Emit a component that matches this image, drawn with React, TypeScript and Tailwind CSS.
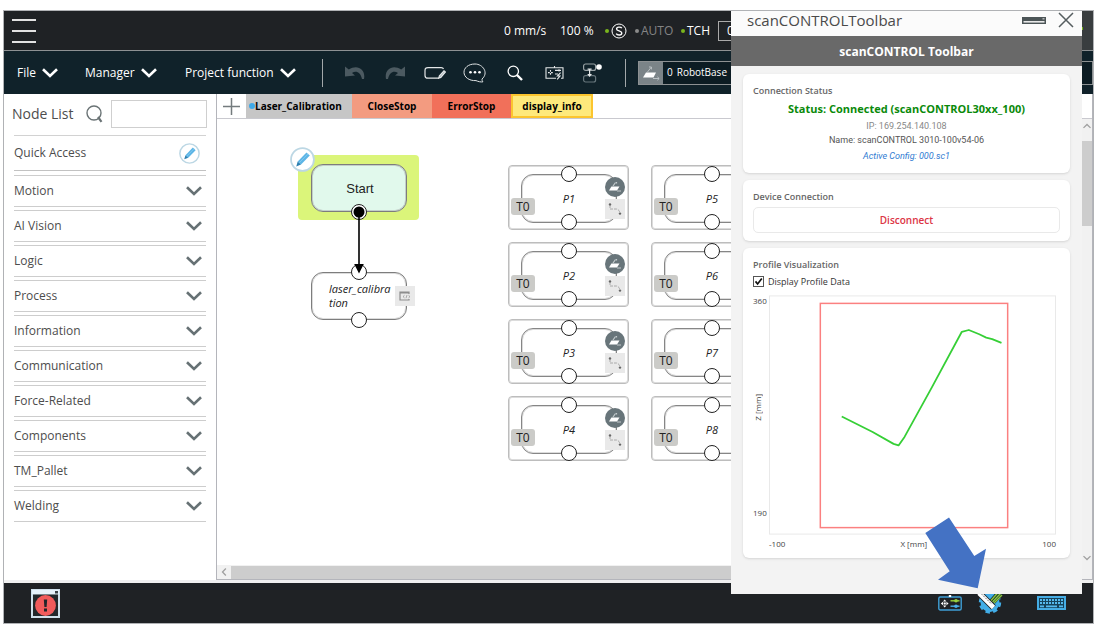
import React from "react";

const categories = [
  "Motion",
  "AI Vision",
  "Logic",
  "Process",
  "Information",
  "Communication",
  "Force-Related",
  "Components",
  "TM_Pallet",
  "Welding",
];

const points = ["P1", "P5", "P2", "P6", "P3", "P7", "P4", "P8"];

function Chevron({ className }: { className: string }) {
  return (
    <svg viewBox="0 0 16 10" className={className} fill="none" stroke="currentColor" strokeWidth="2.6">
      <path d="M1 1.3 L8 8 L15 1.3" />
    </svg>
  );
}

function PencilBadge({ className }: { className: string }) {
  return (
    <svg viewBox="0 0 24 24" className={className}>
      <circle cx="12" cy="12" r="11" fill="#fff" stroke="#bcd7e4" strokeWidth="1.7" />
      <path d="M7.4 14 L15.8 5.2 L19 8.2 L10.6 16.8 Z" fill="#5cb5e6" />
      <path d="M7.4 14 L10.6 16.8 L6 18.6 Z" fill="#2b7fb0" />
      <path d="M9 15 L17.2 6.6" stroke="#8fd0f2" strokeWidth="0.7" />
    </svg>
  );
}

function Port({ className }: { className: string }) {
  return <span className={`absolute size-4 rounded-full border border-[#222] bg-white ${className}`} />;
}

function TopBar() {
  return (
    <header className="flex h-[39px] items-center justify-between bg-[#1f2225] text-[12px] text-white">
      <button aria-label="Menu" className="ml-2 flex h-6 w-6 flex-col justify-between">
        <span className="h-0.5 w-full bg-[#e2e2e2]" />
        <span className="h-0.5 w-full bg-[#e2e2e2]" />
        <span className="h-0.5 w-full bg-[#e2e2e2]" />
      </button>
      <div className="flex h-full items-center">
        <span className="w-14">0 mm/s</span>
        <span className="w-[45px]">100 %</span>
        <span className="size-1 rounded-full bg-[#7ab51d]" />
        <svg viewBox="0 0 16 16" className="mr-2 ml-0.5 size-4" fill="none" stroke="#fff">
          <circle cx="8" cy="8" r="7" strokeWidth="1" />
          <path d="M10.8 5.2 C9.8 3.6 5.6 3.6 5.6 6 C5.6 8.4 10.8 7.4 10.8 10 C10.8 12.6 6.2 12.4 5.2 10.6" strokeWidth="1.4" />
        </svg>
        <span className="size-1 rounded-full bg-[#8b8b8b]" />
        <span className="mr-1.5 ml-0.5 w-[34px] text-[#858585]">AUTO</span>
        <span className="size-1 rounded-full bg-[#7ab51d]" />
        <span className="ml-0.5 w-[31px]">TCH</span>
        <span className="h-5 w-[352px] border border-[#aaa] pl-2 leading-[17px]">0</span>
        <span className="ml-2 flex h-full w-[15px] items-center bg-[#393d3f] pb-1">
          <span className="ml-0.5 size-[3px] bg-[#7ab51d]" />
        </span>
      </div>
    </header>
  );
}

function ToolBar() {
  return (
    <nav className="flex h-11 items-center border-t border-[#8d9193] bg-[#10222a] pl-[13px] text-[12px] text-white">
      <button className="flex w-[68px] items-center gap-1.5">
        File <Chevron className="h-2.5 w-4" />
      </button>
      <button className="flex w-[100px] items-center gap-1.5">
        Manager <Chevron className="h-2.5 w-4" />
      </button>
      <button className="flex w-[137px] items-center gap-1.5 whitespace-nowrap">
        Project function <Chevron className="h-2.5 w-4" />
      </button>
      <span className="mr-[22px] h-7 w-px bg-[#a3a8aa]" />
      <div className="flex w-[282px] items-center">
        <button aria-label="Undo" className="w-10">
          <svg viewBox="0 0 20 14" className="h-3.5 w-5" fill="#4c5a61">
            <path d="M0 0.5 V10.5 L10 9.6 L7 7 C11 4.5 15.5 6 17 13 H19 C21 3 12 -2 3.8 3.6 Z" />
          </svg>
        </button>
        <button aria-label="Redo" className="w-[39px]">
          <svg viewBox="0 0 20 14" className="h-3.5 w-5" fill="#4c5a61">
            <path d="M20 0.5 V10.5 L10 9.6 L13 7 C9 4.5 4.5 6 3 13 H1 C-1 3 8 -2 16.2 3.6 Z" />
          </svg>
        </button>
        <button aria-label="Rename" className="w-[39px]">
          <svg viewBox="0 0 22 14" className="h-3.5 w-[22px]" fill="none" stroke="#e4e7e8" strokeWidth="1.2">
            <path d="M19.5 3 C19 1.5 18 1.6 17 1.6 H4 Q1 1.6 1 4.4 V9.4 Q1 12.2 4 12.2 H15" />
            <path d="M15.4 9.8 L20 4.8 L21.4 6 L16.8 11.4 L14.8 12 Z" fill="#a8b2b6" />
          </svg>
        </button>
        <button aria-label="Comment" className="w-11">
          <svg viewBox="0 0 24 20" className="h-5 w-6" fill="none" stroke="#dfe3e4" strokeWidth="1">
            <path d="M19 16 C26 10 20 1 12 1 C5 1 1 5 1 9.3 C1 14 6 18 13 17.6 C15 18.5 18 19.3 20 18.8 C19 18 19 17 19 16 Z" />
            <g fill="#fff" stroke="none">
              <circle cx="7.5" cy="9.3" r="1.3" />
              <circle cx="12" cy="9.3" r="1.3" />
              <circle cx="16.5" cy="9.3" r="1.3" />
            </g>
          </svg>
        </button>
        <button aria-label="Search" className="w-[38px]">
          <svg viewBox="0 0 16 16" className="size-4" fill="none" stroke="#fff">
            <circle cx="6.3" cy="6.3" r="5.2" strokeWidth="1.3" />
            <path d="M10 10 L15 15" strokeWidth="2.4" />
          </svg>
        </button>
        <button aria-label="Controller" className="w-[38px]">
          <svg viewBox="0 0 19 14" className="h-3.5 w-[19px]" fill="none" stroke="#e4e7e8" strokeWidth="1.1">
            <path d="M11 12.2 H1 V1.8 H18 V12.2 H16 M9.5 0 V1.8" />
            <path d="M3 6.6 H8 M5.5 4 V9.2" strokeDasharray="1.8 1.2" />
            <path d="M10 4.4 H16 M10 8 H13 M14 3.2 V5.6" />
            <path d="M15.6 6.6 L12.4 10 H15 L12.2 13.4" />
          </svg>
        </button>
        <button aria-label="Flow">
          <svg viewBox="0 0 20 20" className="size-5" fill="none" strokeWidth="1.2">
            <rect x="0.6" y="1" width="12" height="6.4" rx="2" stroke="#9aa3a6" />
            <rect x="0.6" y="12.6" width="12" height="6.4" rx="2" stroke="#66757b" />
            <path d="M6.6 6 V12 M4.6 6.2 H8.6" stroke="#e4e7e8" />
            <path d="M4.2 11 H9 L6.6 14 Z" fill="#e4e7e8" />
            <circle cx="16" cy="4" r="2.8" fill="#fff" />
          </svg>
        </button>
      </div>
      <span className="mr-3 -ml-0.5 h-7 w-px bg-[#a3a8aa]" />
      <div className="flex h-6 flex-1 items-center border border-[#8d9193] bg-[#0c1c23] text-[10px]">
        <span className="flex h-full w-6 items-center justify-center bg-[#7b8488]">
          <FrameIcon />
        </span>
        <span className="ml-1">0</span>
        <span className="ml-1">RobotBase</span>
      </div>
    </nav>
  );
}

function FrameIcon() {
  return (
    <svg viewBox="0 0 18 16" className="h-4 w-[18px]" fill="none">
      <path d="M4 7.5 H14 L11.5 12.5 H1 Z" fill="#fff" />
      <path d="M5.5 7 L9 2.5 M7 2 H9.4 V4.4 M11 13.5 H17 M15.4 11.8 L17.2 13.5 L15.4 15.2" stroke="#c3cacc" strokeWidth="0.9" />
    </svg>
  );
}

function Sidebar() {
  return (
    <aside className="flex w-[213px] shrink-0 flex-col border-r border-[#b4b5bb] bg-white text-[12px] text-[#4d4d4d]">
      <div className="mr-2 flex h-[41px] items-center pb-0.5 pl-2">
        <label htmlFor="node-search" className="w-[74px] text-[14px]">
          Node List
        </label>
        <svg viewBox="0 0 17 18" className="h-[18px] w-[17px]" fill="none" stroke="#6a7375">
          <circle cx="8" cy="8" r="7" strokeWidth="1.4" />
          <path d="M12 12 L15.5 16.8" strokeWidth="2.2" />
        </svg>
        <input id="node-search" className="ml-2 h-7 w-24 border border-[#cfcfcf] bg-white px-1 outline-none" />
      </div>
      <div className="mr-2.5 ml-2.5 flex h-9 items-center justify-between border-t border-b border-t-[#d2d2d2] border-b-[#c2c2c2]">
        <span>Quick Access</span>
        <button aria-label="Edit quick access" className="mr-1.5">
          <PencilBadge className="size-[21px]" />
        </button>
      </div>
      <ul className="mt-1 mr-2.5 ml-2.5 flex flex-col gap-[3px]">
        {categories.map((name) => (
          <li key={name}>
            <button className="flex h-8 w-full items-center justify-between border-y border-[#cdcdcd] pr-1">
              {name}
              <Chevron className="h-2.5 w-4 text-[#667174]" />
            </button>
          </li>
        ))}
      </ul>
    </aside>
  );
}

function PointNode({ name }: { name: string }) {
  return (
    <div className="relative h-[65px] w-[121px] rounded-sm border border-[#bdbdbd] shadow-[inset_0_0_0_1px_#dcdcdc]">
      <div className="absolute top-2 left-3 flex h-[49px] w-24 items-center justify-center rounded-[12px] border border-[#868686] pt-px text-[11px] text-[#222] italic shadow-[inset_0_0_0_1px_#dcdcdc]">
        {name}
      </div>
      <Port className="top-0 left-[52px]" />
      <Port className="top-12 left-[52px]" />
      <span className="absolute top-8 left-0.5 h-[17px] w-6 rounded-[3px] bg-[#cbcbc8] text-center text-[12px] leading-[18px] text-[#222]">
        T0
      </span>
      <span className="absolute top-[33px] right-[3px] flex size-5 items-center justify-center bg-[#e9e9e9]">
        <svg viewBox="0 0 14 14" className="size-3.5" fill="none">
          <path d="M2 3 V7 H8 Q11 7 12 11" stroke="#aaa" strokeDasharray="3 1" />
          <circle cx="2" cy="2.4" r="1.2" fill="#666" />
          <circle cx="12" cy="11.6" r="1.2" fill="#666" />
        </svg>
      </span>
      <span className="absolute top-[11px] right-[3px] flex size-5 items-center justify-center rounded-full bg-[#68757a]">
        <svg viewBox="0 0 14 12" className="h-3 w-3.5" fill="none">
          <path d="M3.4 5.6 H11.5 L9 9.4 H1 Z" fill="#fff" />
          <path d="M5 5 L7.5 1.5 M8.5 1 V2.5 M9 10 H13" stroke="#c3cacc" strokeWidth="1.2" />
        </svg>
      </span>
    </div>
  );
}

function FlowCanvas() {
  return (
    <div className="relative min-h-[446px] flex-1 overflow-hidden bg-white">
      <div className="absolute top-[36px] left-[81px] h-[65px] w-[121px] rounded-sm bg-[#dbf57a]" />
      <div className="absolute top-[45px] left-[94px] flex h-12 w-24 items-center justify-center rounded-[12px] border border-[#7d7d7d] bg-[#e1f9ec] pt-0.5 pl-0.5 font-['Liberation_Sans',sans-serif] text-[13px] text-[#222] shadow-[inset_0_0_0_1px_#c3d0c9]">
        Start
      </div>
      <PencilBadge className="absolute top-[28px] left-[73px] size-[25px]" />
      <div className="absolute top-[153px] left-[94px] h-12 w-24 rounded-[12px] border border-[#7d7d7d] bg-white pt-[9px] pl-[17px] text-[11px] leading-[14px] text-[#222] italic shadow-[inset_0_0_0_1px_#dcdcdc]">
        laser_calibra
        <br />
        tion
      </div>
      <Port className="top-[85px] left-[134px]" />
      <Port className="top-[145px] left-[134px]" />
      <Port className="top-[193px] left-[134px]" />
      <svg viewBox="0 0 16 70" className="absolute top-[85px] left-[134px] h-[70px] w-4">
        <circle cx="8" cy="8" r="5.5" />
        <path d="M7.2 8 H8.8 V60 H12.8 L8 69.5 L3.2 60 H7.2 Z" />
      </svg>
      <span className="absolute top-[167px] left-[178px] flex size-5 items-center justify-center bg-[#e9e9e9]">
        <svg viewBox="0 0 12 10" className="h-2.5 w-3" fill="none" stroke="#8d8d8d">
          <path d="M10 3 V1 H1 V9 H10 V8 M1 2 H10" strokeWidth="1.2" />
          <path d="M5.5 4.3 L4 5.6 L5.5 6.9 M9.5 4.3 L11 5.6 L9.5 6.9 M8 4 L7 7.2" strokeWidth="0.7" />
        </svg>
      </span>
      <div className="absolute top-[46px] left-[291px] grid grid-cols-[121px_121px] gap-x-[22px] gap-y-3">
        {points.map((name) => (
          <PointNode key={name} name={name} />
        ))}
      </div>
    </div>
  );
}

function Workspace() {
  return (
    <main className="flex min-w-0 flex-1 flex-col border-r border-b border-[#b4b5bb]">
      <div className="flex h-[25px] shrink-0 border-b border-[#c9c9cf] text-[10px] font-bold text-black">
        <button aria-label="Add tab" className="flex w-[29px] items-center justify-center">
          <svg viewBox="0 0 17 17" className="size-[17px]" stroke="#747b7e" strokeWidth="1.5">
            <path d="M8.5 0 V17 M0 8.5 H17" />
          </svg>
        </button>
        <button className="flex w-[106px] items-center bg-[#c6c6c6] pl-[3px]">
          <span className="size-1.5 shrink-0 rounded-full bg-[#3fa9e8]" />
          Laser_Calibration
        </button>
        <button className="w-20 bg-[#f39b80]">CloseStop</button>
        <button className="w-[79px] bg-[#f1705a]">ErrorStop</button>
        <button className="w-[82px] border-2 border-[#fcc52e] bg-[#fee97c]">display_info</button>
      </div>
      <div className="flex flex-1">
        <FlowCanvas />
        <div className="flex w-[11px] flex-col items-center justify-between bg-[#f1f1f1] py-1">
          <Chevron className="h-1.5 w-2 rotate-180 text-[#a0a0a0]" />
          <span className="mt-3 h-[85px] w-full bg-[#cdcdcd]" />
          <span className="flex-1" />
          <Chevron className="h-1.5 w-2 text-[#a0a0a0]" />
        </div>
      </div>
      <div className="flex h-[14px] shrink-0 items-center bg-[#f1f1f1] pl-[3px]">
        <Chevron className="h-1.5 w-2 rotate-90 text-[#a0a0a0]" />
        <span className="ml-[3px] h-[13px] w-[620px] bg-[#cdcdcd]" />
      </div>
    </main>
  );
}

function StatusBar() {
  return (
    <footer className="flex h-10 shrink-0 items-center bg-[#1f2225] pr-[27px] pl-[27px]">
      <button aria-label="Errors">
        <svg viewBox="0 0 29 29" className="size-[29px]">
          <path d="M0 0 H29 V29 H0 Z" fill="#cfe0ea" />
          <path d="M2 5.5 H27 V27 H2 Z" fill="#23282b" />
          <path d="M1 1 H28 V5 H1 Z" fill="#e6f2fa" />
          <path d="M24 2 H27 V4.5 H24 Z" fill="#394045" />
          <circle cx="14.5" cy="16.5" r="10.4" fill="#f15b5b" />
          <path d="M12.8 10.5 H16.2 L15.6 18 H13.4 Z M13 19.5 H16 V22.4 H13 Z" fill="#22262a" />
        </svg>
      </button>
      <div className="ml-auto flex items-center">
        <button aria-label="Controller">
          <svg viewBox="0 0 24 16" className="h-4 w-6" fill="none">
            <rect x="0.8" y="2" width="22.4" height="13" rx="1.5" stroke="#3f9fd6" strokeWidth="1.4" />
            <path d="M10.8 1 H13.2" stroke="#fff" strokeWidth="2" />
            <path d="M2.8 8.5 L5 6.8 V10.2 Z M10.6 8.5 L8.4 6.8 V10.2 Z M6.7 4.6 L5 6.6 H8.4 Z M6.7 12.4 L5 10.4 H8.4 Z M5.6 7.6 H7.8 V9.4 H5.6 Z" fill="#fff" />
            <path d="M12.5 5.8 H21.5" stroke="#9bd33c" strokeWidth="1.4" />
            <circle cx="18" cy="5.8" r="1.8" fill="#9bd33c" />
            <path d="M12.5 11.2 H21.5" stroke="#4ab0ea" strokeWidth="1.4" />
            <circle cx="18" cy="11.2" r="1.8" fill="#4ab0ea" />
          </svg>
        </button>
        <button aria-label="Toolbar settings" className="ml-3.5">
          <svg viewBox="0 0 28 28" className="size-7">
            <circle cx="14" cy="13.5" r="6.5" fill="none" stroke="#42aee8" strokeWidth="6" />
            <circle cx="14" cy="13.5" r="9.8" fill="none" stroke="#42aee8" strokeWidth="2.8" strokeDasharray="4.4 3.3" />
            <path d="M25 3 L16.5 12.5" stroke="#10222a" strokeWidth="6.5" />
            <path d="M22.5 3 L14.5 12 M24.5 4.5 L16.5 13 M26 6 L18 14" stroke="#8bc53f" strokeWidth="1.5" />
            <path d="M3 4 L17.5 18.5" stroke="#1f2225" strokeWidth="6.5" />
            <path d="M3 4 L17.5 18.5" stroke="#fff" strokeWidth="4.6" />
            <path d="M5 4.5 L15 14.5" stroke="#555" strokeWidth="0.8" strokeDasharray="2 1" />
          </svg>
        </button>
        <button aria-label="Keyboard" className="ml-[33px]">
          <svg viewBox="0 0 29 14" className="h-3.5 w-[29px]">
            <rect width="29" height="14" fill="#45ade5" />
            <path d="M2 2 H27 V12 H2 Z" fill="#16435b" />
            <path d="M3 4 H26 M3 7 H26" stroke="#55b9ee" strokeWidth="2" strokeDasharray="2 1" />
            <path d="M3 10.3 H7 M9 10.3 H20 M22 10.3 H26" stroke="#55b9ee" strokeWidth="1.8" />
          </svg>
        </button>
      </div>
    </footer>
  );
}

function ProfileChart() {
  return (
    <div className="grid grid-cols-[16px_1fr] text-[8px] leading-[10px] text-[#444]">
      <div className="flex flex-col items-start justify-between pt-px pb-[17px]">
        <span>360</span>
        <span className="rotate-180 whitespace-nowrap [writing-mode:vertical-rl]">Z [mm]</span>
        <span>190</span>
      </div>
      <svg viewBox="0 0 288 240" className="h-60 w-full" fill="none">
        <rect x="0.5" y="0.5" width="287" height="239" stroke="#e9e9e9" />
        <rect x="51.5" y="8" width="188" height="225" stroke="#fb8080" strokeWidth="1.5" />
        <path
          d="M73 121.5 L104 137 L125 149 L130 150.5 L136 142 L163 93 L193.5 36.5 L200.5 34.7 L211 39 L218 42.3 L224 43.8 L233.3 47.7"
          stroke="#36cf36"
          strokeWidth="1.8"
          strokeLinejoin="round"
        />
      </svg>
      <div className="col-start-2 mt-1 flex justify-between">
        <span>-100</span>
        <span>X [mm]</span>
        <span>100</span>
      </div>
    </div>
  );
}

function ScanDialog() {
  return (
    <section
      aria-label="scanCONTROLToolbar"
      className="absolute top-0 right-[11px] flex h-[583px] w-[351px] flex-col bg-[#f3f3f3]"
    >
      <div className="flex h-[25px] items-center bg-[#fbfbfb] pr-2 pb-[7px] pl-4 text-[#4a4a4a]">
        <h1 className="flex-1 text-[15px] leading-[18px]">scanCONTROLToolbar</h1>
        <button aria-label="Minimize" className="mr-3">
          <svg viewBox="0 0 24 7" className="h-[7px] w-6">
            <path d="M0 0 H24 V7 H0 Z" fill="#4c5557" />
            <path d="M1.5 4 H22.5 V5.6 H1.5 Z" fill="#e8e8e8" />
            <path d="M20.5 1.2 H22.5 V2.4 H20.5 Z" fill="#cfcfcf" />
          </svg>
        </button>
        <button aria-label="Close">
          <svg viewBox="0 0 16 16" className="size-4" stroke="#565e60" strokeWidth="1.5">
            <path d="M1 1 L15 15 M15 1 L1 15" />
          </svg>
        </button>
      </div>
      <h2 className="flex h-[30px] items-center justify-center bg-[#696969] pt-0.5 text-[12px] font-bold text-white">
        scanCONTROL Toolbar
      </h2>
      <div className="flex flex-col gap-[7px] px-3 pt-2">
        <div className="flex h-[99px] flex-col items-center rounded-md bg-white px-2.5 pt-2.5 text-[9px] leading-[14px] shadow-sm">
          <h3 className="self-start text-[9px] font-semibold text-[#666]">Connection Status</h3>
          <p className="pt-px text-[11px] leading-5 font-bold text-[#0a8a0a]">
            Status: Connected (scanCONTROL30xx_100)
          </p>
          <p className="font-['Roboto',sans-serif] text-[#888]">IP: 169.254.140.108</p>
          <p className="font-['Roboto',sans-serif] text-[#555]">Name: scanCONTROL 3010-100v54-06</p>
          <p className="mt-0.5 font-['Roboto',sans-serif] text-[#2f7bd2] italic">Active Config: 000.sc1</p>
        </div>
        <div className="h-[61px] rounded-md bg-white px-2.5 pt-2.5 shadow-sm">
          <h3 className="text-[9px] leading-[14px] font-semibold text-[#666]">Device Connection</h3>
          <button className="mt-[3px] h-[26px] w-full rounded-[5px] border border-[#e9e9e9] text-[10px] font-semibold text-[#dc3545]">
            Disconnect
          </button>
        </div>
        <div className="h-[310px] rounded-md bg-white pt-2.5 pr-3.5 pl-2.5 shadow-sm">
          <h3 className="text-[9px] leading-[14px] font-semibold text-[#666]">Profile Visualization</h3>
          <label className="mt-0.5 mb-1.5 flex h-[15px] items-center gap-1 text-[9px] text-[#333]">
            <span className="relative size-[11px]">
              <input
                type="checkbox"
                defaultChecked
                className="peer block size-[11px] appearance-none border border-[#555] bg-white"
              />
              <svg
                viewBox="0 0 11 11"
                className="pointer-events-none absolute inset-0 hidden size-[11px] peer-checked:block"
                fill="none"
                stroke="#111"
                strokeWidth="1.7"
              >
                <path d="M2.5 5.4 L4.6 8 L8.8 2.6" />
              </svg>
            </span>
            Display Profile Data
          </label>
          <ProfileChart />
        </div>
      </div>
      <svg viewBox="0 0 62 72" className="absolute top-[506px] left-[194px] h-[72px] w-[62px]">
        <path d="M24 0.5 L0.3 16 L24.7 54.3 L13 62.7 L52.7 71.3 L61 31.7 L49.3 39 Z" fill="#4472c4" />
      </svg>
    </section>
  );
}

export default function App() {
  return (
    <div className="flex min-h-screen flex-col bg-white pt-2.5 pr-[3px] pb-[5px] pl-[3px] font-['Open_Sans','Noto_Sans',sans-serif]">
      <div className="relative flex flex-1 flex-col border border-[#b0b2b5]">
        <TopBar />
        <ToolBar />
        <div className="flex flex-1 border-b-[3px] border-[#f0f0f0]">
          <Sidebar />
          <Workspace />
        </div>
        <StatusBar />
        <ScanDialog />
      </div>
    </div>
  );
}
